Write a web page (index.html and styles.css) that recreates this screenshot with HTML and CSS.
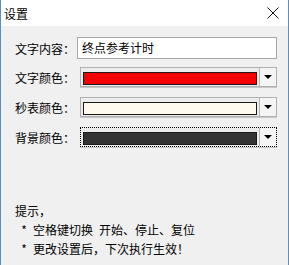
FILE: index.html
```html
<!DOCTYPE html>
<html>
<head>
    <title>设置</title>
    <link rel="stylesheet" href="styles.css">
</head>
<body>
    <div class="window">
        <div class="titlebar">
            <span class="title">设置</span>
            <svg class="close" width="12" height="12" viewBox="0 0 12 12">
                <path d="M0.5 0.5 L11.5 11.5 M11.5 0.5 L0.5 11.5" stroke="#111" stroke-width="1" fill="none"/>
            </svg>
        </div>
        <div class="content">
            <div class="row row-text">
                <span class="label">文字内容：</span>
                <div class="textbox">终点参考计时</div>
            </div>
            <div class="row">
                <span class="label">文字颜色：</span>
                <div class="combo">
                    <span class="swatch red"></span>
                    <span class="drop"><i class="arrow"></i></span>
                </div>
            </div>
            <div class="row">
                <span class="label">秒表颜色：</span>
                <div class="combo">
                    <span class="swatch cream"></span>
                    <span class="drop"><i class="arrow"></i></span>
                </div>
            </div>
            <div class="row">
                <span class="label">背景颜色：</span>
                <div class="combo focused">
                    <span class="swatch dark"></span>
                    <span class="drop"><i class="arrow"></i></span>
                </div>
            </div>
            <div class="hint">
                <p>提示，</p>
                <p><span class="star">*</span>空格键切换&ensp;开始、停止、复位</p>
                <p><span class="star">*</span>更改设置后，下次执行生效！</p>
            </div>
        </div>
    </div>
</body>
</html>
```

FILE: styles.css
```css
body {
    margin: 0;
    padding: 0;
    font-family: "Noto Sans CJK SC", "Liberation Sans", sans-serif;
    font-size: 12px;
    color: #000;
    background: #f0f0f0;
}

.window {
    width: 287px;
    height: 265px;
    border-left: 1px solid #5a8fc0;
    border-right: 1px solid #5a8fc0;
    background: #f0f0f0;
}

.titlebar {
    height: 26px;
    background: #fff;
    display: flex;
    align-items: center;
    justify-content: space-between;
    padding: 0 9px 0 3px;
}

.title {
    font-size: 12px;
}

.close {
    display: block;
}

.content {
    padding-left: 14px;
}

.row {
    display: flex;
    align-items: center;
    height: 20px;
    margin-top: 10px;
}

.row-text {
    height: 22px;
    margin-top: 11px;
}

.row-text + .row {
    margin-top: 8px;
}

.label {
    width: 62px;
    white-space: nowrap;
}

.textbox {
    width: 200px;
    height: 22px;
    box-sizing: border-box;
    border: 1px solid #a8a8a8;
    background: #fff;
    padding-left: 4px;
    line-height: 20px;
}

.combo {
    margin-left: 3px;
    width: 197px;
    height: 20px;
    box-sizing: border-box;
    border: 1px solid #b0b0b0;
    box-shadow: 0 1px 0 #c8c8c8;
    background: #ececec;
    display: flex;
    padding: 4px 0 1px 2px;
}

.combo.focused {
    border: 1px dotted #000;
}

.swatch {
    width: 174px;
    height: 13px;
    box-sizing: border-box;
    border: 1px solid #1a1a1a;
}

.swatch.red {
    background: #f50000;
}

.swatch.cream {
    background: #fff9ee;
}

.swatch.dark {
    background: #333;
}

.drop {
    margin: -4px 0 -1px auto;
    width: 16px;
    border-left: 1px solid #b8b8b8;
    background: #f4f4f4;
    display: flex;
    align-items: center;
    justify-content: center;
}

.arrow {
    width: 0;
    height: 0;
    border-left: 4px solid transparent;
    border-right: 4px solid transparent;
    border-top: 4px solid #000;
}

.hint {
    margin-top: 54px;
    line-height: 19px;
}

.hint p {
    margin: 0;
    white-space: nowrap;
}

.star {
    display: inline-block;
    width: 18px;
    text-align: center;
}
```
